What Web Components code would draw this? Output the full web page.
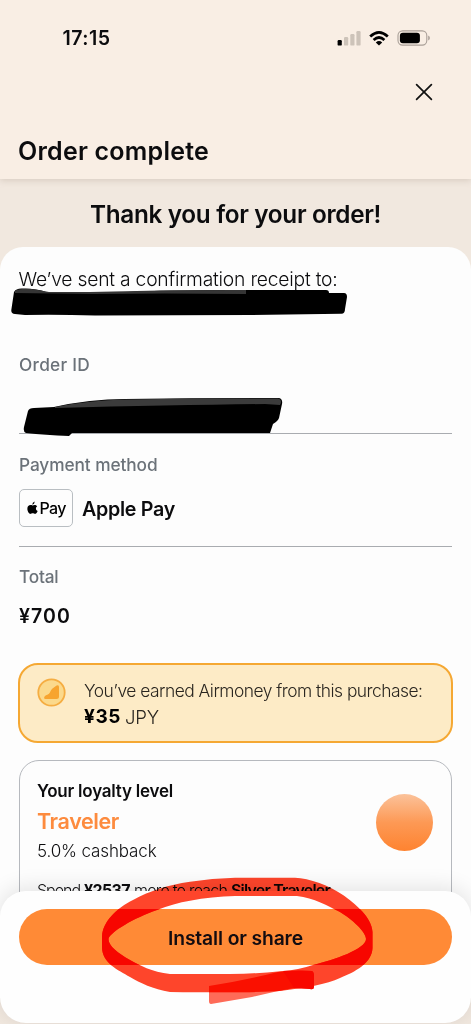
<!DOCTYPE html>
<html lang="en">
<head>
<meta charset="utf-8">
<title>Order complete</title>
<style>
html,body{margin:0;height:1024px;overflow:hidden;background:#f1e8df}
body{font-family:Inter,"Liberation Sans",sans-serif;color:#0c0c0e;position:relative}
</style>
</head>
<body>
<order-page></order-page>
<script>
const define = (name, html, init) => customElements.define(name, class extends HTMLElement {
  constructor() {
    super();
    this.attachShadow({mode: 'open'}).innerHTML = html;
  }
  connectedCallback() { if (init) init(this); }
});

/* One line of text: size, weight, line height and overall width come from attributes. */
define('text-line', `<style>
:host{display:block;white-space:nowrap}
span{display:inline-block;vertical-align:top}
</style><span><slot></slot></span>`, el => {
  const a = n => parseFloat(el.getAttribute(n));
  el.style.fontSize = a('size') + 'px';
  el.style.fontWeight = el.getAttribute('weight') || 400;
  el.style.lineHeight = (a('line') || 24) + 'px';
  const s = el.shadowRoot.querySelector('span');
  const natural = s.getBoundingClientRect().width;
  const n = el.textContent.length;
  if (a('width')) s.style.letterSpacing = ((a('width') - natural) / n).toFixed(3) + 'px';
});

define('status-bar', `<style>
:host{display:flex;justify-content:space-between;padding:26px 41px 0 62.5px;height:24px}
svg{display:block;margin-top:3px}
</style>
<text-line size="19.6" weight="600" width="48">17:15</text-line>
<svg width="94" height="18" viewBox="336 29 94 18">
  <rect x="337.6" y="40" width="4.2" height="5.6" rx="1.2" fill="#000"/>
  <g fill="#cdc3b9"><rect x="344" y="37" width="4.2" height="8.6" rx="1.2"/><rect x="350.3" y="34" width="4.2" height="11.6" rx="1.2"/><rect x="356.4" y="31" width="4.2" height="14.6" rx="1.2"/></g>
  <g fill="none" stroke="#000" stroke-width="2.7"><path d="M370.2 36.4Q379 28.2 387.8 36.4"/><path d="M373.6 40Q379 35 384.4 40"/></g>
  <path d="M375.8 42.4Q379 39.8 382.2 42.4L379 45.4Z"/>
  <rect x="398" y="30.9" width="28.8" height="14.2" rx="4.6" fill="none" stroke="#a99f97" stroke-width="1.1"/>
  <rect x="399.9" y="32.8" width="20" height="10.4" rx="3"/>
  <path d="M428.2 35.6q1.7.7 1.7 2.4t-1.7 2.4z" fill="#a99f97"/>
</svg>`);

define('page-header', `<style>
:host{display:block;position:relative;height:179px;background:#f9eee4;box-shadow:0 1px 7px #a9968766;overflow:visible}
.close{display:flex;justify-content:flex-end;padding:33px 38px 0 0}
text-line{margin:34px 0 0 18px}
</style>
<status-bar></status-bar>
<div class="close"><svg width="18" height="18" viewBox="0 0 18 18"><path d="M1.6 1.6 16.4 16.4M16.4 1.6 1.6 16.4" stroke="#111" stroke-width="1.7" stroke-linecap="round"/></svg></div>
<text-line size="25" weight="600" line="32" width="191"><slot></slot></text-line>`, el => {
  const t = el.shadowRoot.querySelector('text-line');
  const next = document.createElement('text-line');
  for (const [k, v] of [['size', '25'], ['weight', '600'], ['line', '32'], ['width', '191']]) next.setAttribute(k, v);
  next.textContent = el.getAttribute('heading');
  t.replaceWith(next);
});

define('redaction-mark', `<style>
:host{display:block;position:absolute;left:0;top:0;pointer-events:none}svg{display:block;overflow:visible;filter:blur(.5px)}
</style><svg width="471" height="200" viewBox="0 247 471 200">
<path d="M14 292Q16 288 23 288.500Q38 288.500 46 292Q125 292 128 292Q165 290 230 290L326 290Q329 290 329 293L344 293Q347 293 347 297L345 309Q345 314 341 313.700L250 315L95 315.500Q60 314.500 25 315L15 314Q11 314 11.300 310Z" fill="#000"/>
<path d="M15 290.500Q23 287.500 38 290L49 292H90Q160 290 230 290H246V294Q160 293 93 294L15 293Z" fill="#353535"/>
<path d="M28 411Q29 408 34 408L54 407Q90 399 125 399Q200 398 279 398Q283 399 282 404L279 418Q278 421 273 424L270 433H72L69 436Q45 435 26 433Q23 432 24 427Z" fill="#000"/>
<path d="M55 407Q90 400 125 399.500Q200 398 278 398.500Q283 400 280 405L265 404Q175 405 55 408Z" fill="#3b3b3b"/>
</svg>`);

define('detail-row', `<style>
:host{display:block;box-sizing:border-box;border-bottom:1.4px solid #a9acb0}
:host([last]){border:0}
::slotted([slot=label]){color:#6b7279}
</style><slot name="label"></slot><slot></slot>`);

define('pay-badge', `<style>
:host{display:flex;box-sizing:border-box;width:54px;height:38px;border:1.4px solid #b9bec2;border-radius:5px;padding:6px 0 0 6.600px;color:#000}
svg{margin:4.500px 2px 0 0;flex:none}
</style><svg width="11" height="14" viewBox="0 0 12 14"><path d="M8.300 0Q8.500 2.700 5.800 3.500Q5.600 1 8.300 0ZM6 4.200C7.300 3.700 9.600 3 11.100 5C8.900 6.600 9.500 9.300 11.600 10.200C10.900 12 9.900 13.400 8.900 13.400C7.800 13.400 7.300 12.800 6.200 12.800C5.100 12.800 4.500 13.500 3.600 13.400C2 13.300.4 10.300.4 7.800C.4 4.400 3 3 6 4.200Z"/></svg>
<text-line size="16" weight="450" width="26">Pay</text-line>`);

define('reward-card', `<style>
:host{display:flex;box-sizing:border-box;height:80px;margin:0 -1px;border:2.500px solid #f5a833;border-radius:20px;background:#fdebc6;padding:13px 0 0 17px;color:#29251f}
svg{margin:0 18px 0 0;flex:none}
.amount{display:flex;gap:4px;margin-top:.500px}
</style>
<svg width="29" height="29" viewBox="0 0 29 29"><circle cx="14.500" cy="14.500" r="13.200" fill="#fbd98c" stroke="#f5ad42" stroke-width="1.800"/><path d="M8.500 21Q6.500 21 7.400 18.800C9 16.500 10.500 17.300 12 15.700C13.500 14 13.600 12 15.500 10.500L19.600 7.600Q22 6.500 22 9V18.500Q22 21 19.500 21Z" fill="#f7a42f"/></svg>
<div style="margin-top:-.500px"><text-line size="17.400" weight="330" line="26" width="338.500">You’ve earned Airmoney from this purchase:</text-line>
<div class="amount"><text-line size="19" weight="700" line="26" width="37" style="color:#000">¥35</text-line><text-line size="18.600" weight="330" line="26" width="34">JPY</text-line></div></div>`);

define('loyalty-card', `<style>
:host{display:flex;justify-content:space-between;box-sizing:border-box;height:180px;border:1.300px solid #b6b9be;border-radius:20px;padding:18px 18px 0 17px}
.level{color:#fd8b3e}
.medal{width:57px;height:57px;border-radius:50%;background:linear-gradient(#fbc29a,#fd9955 50%,#fe8330);margin-top:15px;flex:none}
.info{width:300px}
.next{display:flex;gap:4px;margin-top:14.500px}
</style>
<div class="info">
<text-line size="17" weight="600" line="24" width="136">Your loyalty level</text-line>
<text-line class="level" size="21.500" weight="600" line="30" width="82" style="margin-top:3px">Traveler</text-line>
<text-line size="17" weight="330" line="24" width="119.500" style="margin-top:3px">5.0% cashback</text-line>
<div class="next"><text-line size="16" weight="330" width="43">Spend</text-line><text-line size="16" weight="700" width="46">¥2537</text-line><text-line size="16" weight="330" width="93">more to reach</text-line><text-line size="16" weight="600" width="99">Silver Traveler</text-line></div>
</div><div class="medal"></div>`);

define('action-footer', `<style>
:host{display:block;position:absolute;left:0;bottom:1px;width:471px;height:132px;box-sizing:border-box;padding:18px 19px;background:#fefefe;border-radius:26px;box-shadow:0 -3px 22px #0000001c}
button{all:unset;display:flex;box-sizing:border-box;width:433px;height:56px;padding-top:2px;border-radius:28px;background:#ff8a36;align-items:center;justify-content:center;color:#130c10}
</style><button><text-line size="19.300" weight="560" line="26" width="135">Install or share</text-line></button>`);

define('ink-circle', `<style>
:host{display:block;position:absolute;left:90px;top:870px;mix-blend-mode:multiply;pointer-events:none}
svg{display:block;filter:blur(.6px)}
</style><svg width="300" height="145" viewBox="90 870 300 145">
<defs>
<path id="ring" clip-rule="evenodd" fill-rule="evenodd" d="M102 937C102 922 117 908 133 900C149 891 168 885 190 881.700Q212 878.500 235 877.800H295C309 878 330 886 343 895C354 903 372 917 372.500 932V948C372 963 355 972 340 978C327 984 305 988 280 991Q250 993 170 992C153 989 140 983 130 977C118 970 102 963 102 947ZM108.500 939C110 932 134 918 157 910C168 906 179 902 190 900.700Q212 896.500 235 896H297C314 898 328 906 340 912C352 919 366 932 366 939C366 949 334 960 313 965Q298 970 283 971Q255 974 230 974H170C152 972 139 965 130 960C118 953 108.500 946 108.500 939Z"/>
<clipPath id="ringclip"><use href="#ring"/></clipPath>
<clipPath id="bar"><rect x="90" y="909" width="300" height="56"/></clipPath>
</defs>
<path id="tail" fill="#ff6b58" d="M209 986Q246 980 278 972Q298 970 312 971Q314 972 314 976V987Q314 990 310 989L294 988Q272 992 252 997L211 1004Q209 1004 209 1001Z"/>
<use href="#ring" fill="#ff452b"/>
<g clip-path="url(#bar)"><use href="#ring" fill="#f70a00"/></g>
<g clip-path="url(#ringclip)"><path fill="#fb1000" d="M209 986Q246 980 278 972Q298 970 312 971Q314 972 314 976V987Q314 990 310 989L294 988Q272 992 252 997L211 1004Q209 1004 209 1001Z"/></g>
<path d="M283 971Q300 970 312 971Q314 972 314 976V987Q314 990 310 989L294 988Z" fill="#f90800"/>
</svg>`);

define('receipt-sheet', `<style>
:host{display:block;position:relative;box-sizing:border-box;height:777px;padding:19px 19px 0;background:#fdfdfd;border-radius:23px 23px 0 0}
.pay{display:flex;gap:9px;margin-top:12.500px}
</style>
<text-line size="19.300" weight="330" line="26" width="319" style="margin-left:-.500px">We’ve sent a confirmation receipt to:</text-line>
<detail-row style="margin-top:60.500px;height:81.500px"><text-line slot="label" size="17.300" weight="540" width="71">Order ID</text-line></detail-row>
<detail-row style="padding-top:18.500px;height:113px"><text-line slot="label" size="17.300" weight="540" width="138.500">Payment method</text-line>
<div class="pay"><pay-badge></pay-badge><text-line size="19.700" weight="600" line="26" width="93" style="margin-top:7px">Apple Pay</text-line></div></detail-row>
<detail-row last style="padding-top:18px;height:116px"><text-line slot="label" size="17.300" weight="540" width="39.500">Total</text-line>
<text-line size="19.500" weight="600" line="26" width="52" style="margin-top:13.500px">¥700</text-line></detail-row>
<reward-card></reward-card>
<loyalty-card style="margin-top:17px"></loyalty-card>
<redaction-mark></redaction-mark>`);

define('order-page', `<style>
:host{display:block;width:471px;height:1024px;overflow:hidden;background:#f1e8df;isolation:isolate;position:relative}
.thanks{display:flex;justify-content:center;height:49px;padding-top:19px}
page-header{--x:0}
receipt-sheet{clip-path:inset(0 0 26px 0)}
</style>
<page-header heading="Order complete"></page-header>
<div class="thanks"><text-line size="24.300" weight="600" line="32" width="291">Thank you for your order!</text-line></div>
<receipt-sheet></receipt-sheet>
<action-footer></action-footer>
<ink-circle></ink-circle>`);
</script>
</body>
</html>
